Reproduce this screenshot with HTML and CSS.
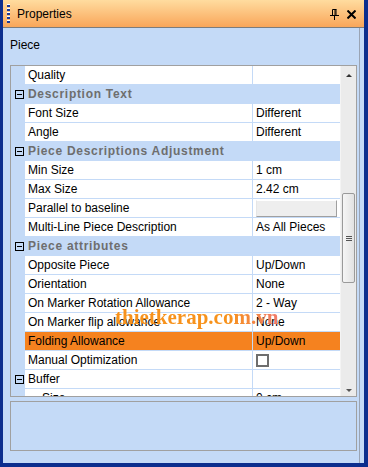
FILE: index.html
```html
<!DOCTYPE html>
<html>
<head>
<meta charset="utf-8">
<link rel="stylesheet" href="styles.css">
</head>
<body>
<div class="window">
  <div class="titlebar">
    <span class="grip"></span>
    <span class="title">Properties</span>
    <svg class="pin" width="9" height="11" viewBox="0 0 9 11"><path d="M2.5 0.5H6.5M2.5 0.5V6M6 0.5V6M5 0.5V6M0 6.5H9M4.5 6.5V11" stroke="#000" stroke-width="1" fill="none"/></svg>
    <svg class="close" width="9" height="9" viewBox="0 0 9 9"><path d="M0.5 0.5L8.5 8.5M8.5 0.5L0.5 8.5" stroke="#000" stroke-width="2" fill="none"/></svg>
  </div>
  <div class="body">
    <div class="label">Piece</div>
    <div class="grid">
      <div class="rows">
        <div class="row"><span class="m"></span><span class="n">Quality</span><span class="s"></span><span class="v"></span></div>
        <div class="row cat"><span class="m"><i class="box"></i></span><span class="n">Description Text</span></div>
        <div class="row"><span class="m"></span><span class="n">Font Size</span><span class="s"></span><span class="v">Different</span></div>
        <div class="row"><span class="m"></span><span class="n">Angle</span><span class="s"></span><span class="v">Different</span></div>
        <div class="row cat"><span class="m"><i class="box"></i></span><span class="n">Piece Descriptions Adjustment</span></div>
        <div class="row"><span class="m"></span><span class="n">Min Size</span><span class="s"></span><span class="v">1 cm</span></div>
        <div class="row"><span class="m"></span><span class="n">Max Size</span><span class="s"></span><span class="v">2.42 cm</span></div>
        <div class="row"><span class="m"></span><span class="n">Parallel to baseline</span><span class="s"></span><span class="v"><i class="btn"></i></span></div>
        <div class="row"><span class="m"></span><span class="n">Multi-Line Piece Description</span><span class="s"></span><span class="v">As All Pieces</span></div>
        <div class="row cat"><span class="m"><i class="box"></i></span><span class="n">Piece attributes</span></div>
        <div class="row"><span class="m"></span><span class="n">Opposite Piece</span><span class="s"></span><span class="v">Up/Down</span></div>
        <div class="row"><span class="m"></span><span class="n">Orientation</span><span class="s"></span><span class="v">None</span></div>
        <div class="row"><span class="m"></span><span class="n">On Marker Rotation Allowance</span><span class="s"></span><span class="v">2 - Way</span></div>
        <div class="row"><span class="m"></span><span class="n">On Marker flip allowance</span><span class="s"></span><span class="v">None</span></div>
        <div class="row sel"><span class="m"></span><span class="n">Folding Allowance</span><span class="s"></span><span class="v">Up/Down</span></div>
        <div class="row"><span class="m"></span><span class="n">Manual Optimization</span><span class="s"></span><span class="v"><i class="check"></i></span></div>
        <div class="row sub"><span class="m"><i class="box"></i></span><span class="n">Buffer</span><span class="s"></span><span class="v"></span></div>
        <div class="row"><span class="m"></span><span class="n indent">Size</span><span class="s"></span><span class="v">0 cm</span></div>
        <div class="watermark">thietkerap.com.vn</div>
      </div>
      <div class="scrollbar">
        <span class="arrow up"></span>
        <span class="track">
          <span class="thumb"><i></i><i></i><i></i></span>
        </span>
        <span class="arrow down"></span>
      </div>
    </div>
    <div class="desc"></div>
  </div>
</div>
</body>
</html>
```

FILE: styles.css
```css
html, body {
  margin: 0;
  padding: 0;
}
body {
  width: 368px;
  height: 467px;
  overflow: hidden;
  font-family: "Liberation Sans", Arial, sans-serif;
  font-size: 12px;
  color: #000;
}
.window {
  width: 368px;
  height: 467px;
  box-sizing: border-box;
  border-style: solid;
  border-color: #0c2e8e;
  border-width: 0 4px 4px 3px;
  display: flex;
  flex-direction: column;
}
.titlebar {
  height: 27px;
  flex: none;
  border-bottom: 1px solid #7c7c7c;
  background: linear-gradient(#ffdc9f, #f9a65a);
  display: flex;
  align-items: center;
}
.grip {
  width: 3px;
  height: 20px;
  margin: 1px 0 0 4px;
  background: repeating-linear-gradient(#fff 0 1px, #1b3a98 1px 3px, transparent 3px 4px);
}
.title {
  margin-left: 7px;
  margin-top: 1px;
}
.pin {
  margin-left: auto;
  margin-top: 1px;
}
.close {
  margin: 1px 8px 0 8px;
}
.body {
  flex: 1;
  background: #c4daf7;
  display: flex;
  flex-direction: column;
  padding: 0 7px 12px 7px;
  box-shadow: inset -4px 0 0 #c4daf7, inset -5px 0 0 #9aa4b4;
}
.label {
  height: 14px;
  line-height: 14px;
  padding-top: 10px;
  margin-bottom: 13px;
}
.grid {
  height: 332px;
  box-sizing: border-box;
  border: 1px solid #a0a0a0;
  display: flex;
  background: #fff;
}
.rows {
  width: 329px;
  height: 330px;
  overflow: hidden;
  position: relative;
}
.row {
  display: grid;
  grid-template-columns: 14px 227px 1px 87px;
  height: 18px;
  line-height: 18px;
  border-bottom: 1px solid #c4daf7;
  white-space: nowrap;
}
.row .m {
  background: #c4daf7;
  display: flex;
  align-items: center;
  justify-content: center;
}
.row .n {
  padding-left: 3px;
  overflow: hidden;
}
.row .n.indent {
  padding-left: 17px;
}
.row .s {
  background: #c4daf7;
}
.row .v {
  padding-left: 3px;
  overflow: hidden;
  display: flex;
  align-items: center;
}
.row.cat {
  grid-template-columns: 14px 1fr;
  background: #c4daf7;
}
.row.cat .n {
  font-weight: bold;
  color: #6e6e6e;
  letter-spacing: 0.7px;
}
.row.sel .n, .row.sel .v {
  background: #f5821f;
}
.box {
  display: block;
  width: 7px;
  height: 7px;
  border: 1px solid #000;
  margin-left: 3px;
  background: linear-gradient(transparent 3px, #000 3px 4px, transparent 4px) 1px 0 / 5px 7px no-repeat, #fff;
}
.row.cat .box, .row.sub .box {
  background: linear-gradient(transparent 3px, #000 3px 4px, transparent 4px) 1px 0 / 5px 7px no-repeat, transparent;
}
.btn {
  display: block;
  width: 79px;
  height: 15px;
  margin-top: 1px;
  background: #eeeeee;
  border: 1px solid;
  border-color: #ffffff #a0a0a0 #a0a0a0 #e6e6e6;
}
.check {
  display: block;
  width: 9px;
  height: 9px;
  border: 2px solid #6e6e6e;
  margin-top: 1px;
}
.watermark {
  position: absolute;
  left: 104px;
  top: 239px;
  font-family: "Liberation Serif", "Times New Roman", serif;
  font-weight: bold;
  font-size: 21px;
  line-height: 24px;
  color: #f7921c;
  background: linear-gradient(90deg, #f7921c 0%, #f7921c 70%, #f07a6a 100%);
  -webkit-background-clip: text;
  background-clip: text;
  -webkit-text-fill-color: transparent;
  white-space: nowrap;
}
.scrollbar {
  width: 16px;
  height: 330px;
  background: #ebebeb;
  border-left: 1px solid #f4f4f4;
  box-sizing: border-box;
  display: flex;
  flex-direction: column;
}
.arrow {
  height: 17px;
  flex: none;
  display: flex;
  align-items: center;
  justify-content: center;
}
.arrow::before {
  content: "";
  border-left: 3px solid transparent;
  border-right: 3px solid transparent;
}
.arrow.up::before {
  border-bottom: 3px solid #333;
  margin-top: 2px;
}
.arrow.down::before {
  border-top: 3px solid #555;
  margin-top: 6px;
}
.track {
  flex: 1;
  display: flex;
  flex-direction: column;
  padding-top: 110px;
}
.thumb {
  width: 13px;
  height: 90px;
  box-sizing: border-box;
  margin-left: 1px;
  border: 1px solid #9a9a9a;
  border-radius: 2px;
  background: linear-gradient(90deg, #f6f6f6, #e2e2e2);
  display: flex;
  flex-direction: column;
  align-items: center;
  justify-content: center;
  gap: 1px;
}
.thumb i {
  display: block;
  width: 6px;
  height: 1px;
  background: #555;
}
.desc {
  margin-top: 4px;
  height: 50px;
  box-sizing: border-box;
  border: 1px solid #a0a0a0;
}
```
